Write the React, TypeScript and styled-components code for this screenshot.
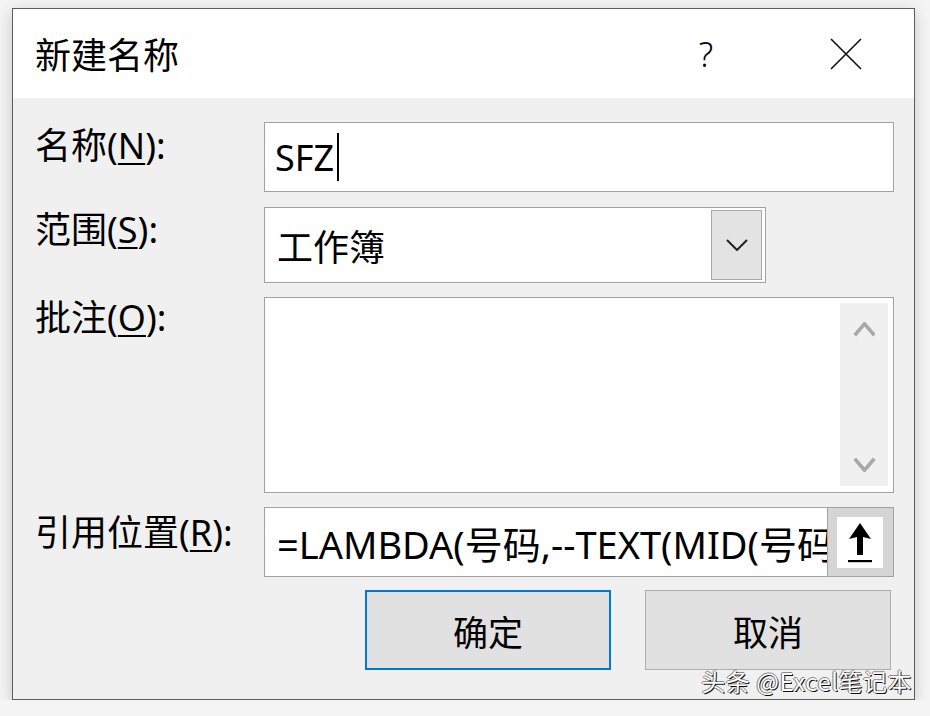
import * as React from "react";
import styled, { createGlobalStyle } from "styled-components";

const GlobalStyle = createGlobalStyle`
  html, body {
    margin: 0;
    padding: 0;
    background: #f4f4f4;
  }
  body {
    font-family: "Noto Sans", "Noto Sans CJK SC", sans-serif;
    color: #000;
  }
`;

const Window = styled.div`
  position: relative;
  box-sizing: border-box;
  width: 903px;
  margin: 8px 0 0 12px;
  border: 1px solid #5c5c5c;
  background: #f0f0f0;
  box-shadow: 0 4px 14px rgba(0, 0, 0, 0.18);
`;

const TitleBar = styled.div`
  height: 89px;
  background: #fff;
  display: flex;
  align-items: center;
  padding: 0 0 0 22px;
`;

const Title = styled.div`
  flex: 1;
  font-size: 36px;
  font-family: "Noto Sans CJK SC", sans-serif;
  margin-top: -2px;
`;

const TitleButton = styled.div<{ $w: number }>`
  width: ${(p) => p.$w}px;
  height: 89px;
  display: flex;
  align-items: center;
  justify-content: center;
  font-size: 34px;
  font-weight: 300;
`;

const Body = styled.div`
  display: grid;
  grid-template-columns: 229px minmax(0, 1fr);
  padding: 24px 20px 29px 22px;
`;

const Label = styled.div<{ $top: number; $gap: number }>`
  font-size: 36px;
  line-height: 42px;
  padding-top: ${(p) => p.$top}px;
  margin-bottom: ${(p) => p.$gap}px;
  white-space: nowrap;
`;

const Key = styled.span`
  text-decoration: underline;
  text-underline-offset: 4px;
  text-decoration-thickness: 2px;
`;

const Field = styled.div<{ $h: number; $gap: number; $w?: number }>`
  box-sizing: border-box;
  height: ${(p) => p.$h}px;
  width: ${(p) => (p.$w ? `${p.$w}px` : "auto")};
  margin-bottom: ${(p) => p.$gap}px;
  background: #fff;
  border: 1px solid #a2a2a2;
  display: flex;
  align-items: center;
  position: relative;
`;

const FieldText = styled.div<{ $size?: number; $pad?: number }>`
  flex: 1;
  min-width: 0;
  padding-left: ${(p) => p.$pad ?? 10}px;
  font-size: ${(p) => p.$size ?? 36}px;
  white-space: nowrap;
  overflow: hidden;
  display: flex;
  align-items: center;
`;

const Caret = styled.span`
  display: inline-block;
  width: 2px;
  height: 48px;
  background: #000;
  margin-left: 3px;
`;

const DropButton = styled.div`
  box-sizing: border-box;
  width: 51px;
  align-self: stretch;
  margin: 2px 3px 2px 0;
  background: #e3e3e3;
  border: 1px solid #a9a9a9;
  display: flex;
  align-items: center;
  justify-content: center;
`;

const ScrollTrack = styled.div`
  position: absolute;
  top: 5px;
  right: 5px;
  bottom: 6px;
  width: 48px;
  background: #f0f0f0;
  display: flex;
  flex-direction: column;
  justify-content: space-between;
  align-items: center;
  padding: 19px 0 14px;
  box-sizing: border-box;
`;

const CollapseButton = styled.div`
  box-sizing: border-box;
  width: 67px;
  height: 70px;
  margin: -1px -1px -1px 0;
  border: 1px solid #a3a3a3;
  background: #d5d5d5;
  padding: 9px 10px 8px 9px;
  display: flex;
`;

const CollapseFace = styled.div`
  flex: 1;
  background: #fff;
  display: flex;
  align-items: center;
  justify-content: center;
`;

const ButtonRow = styled.div`
  grid-column: 1 / 3;
  display: flex;
  justify-content: flex-end;
  gap: 34px;
  padding-right: 3px;
`;

const DialogButton = styled.div<{ $primary?: boolean }>`
  box-sizing: border-box;
  width: 246px;
  height: 80px;
  background: #e1e1e1;
  border: ${(p) => (p.$primary ? "2px solid #0078d7" : "1px solid #adadad")};
  display: flex;
  align-items: center;
  justify-content: center;
  font-size: 35px;
  font-family: "Noto Sans CJK SC", sans-serif;
`;

const Watermark = styled.div`
  position: absolute;
  right: 2px;
  bottom: 1px;
  font-size: 24px;
  font-family: "Noto Sans CJK SC", sans-serif;
  color: #fdfdfd;
  letter-spacing: 0.5px;
  text-shadow: 1px 1px 0 #111, -1px 0 0 #777, 0 -1px 0 #888;
  white-space: nowrap;
`;

const Chevron: React.FC<{ up?: boolean; color: string; w: number; h: number; sw: number }> = ({
  up,
  color,
  w,
  h,
  sw,
}) => (
  <svg width={w} height={h} viewBox={`0 0 ${w} ${h}`}>
    <polyline
      points={
        up
          ? `${sw / 2},${h - sw / 2} ${w / 2},${sw / 2} ${w - sw / 2},${h - sw / 2}`
          : `${sw / 2},${sw / 2} ${w / 2},${h - sw / 2} ${w - sw / 2},${sw / 2}`
      }
      fill="none"
      stroke={color}
      strokeWidth={sw}
    />
  </svg>
);

export default function App() {
  return (
    <>
      <GlobalStyle />
      <Window>
        <TitleBar>
          <Title>新建名称</Title>
          <TitleButton $w={144}>?</TitleButton>
          <TitleButton $w={136}>
            <svg width="32" height="32" viewBox="0 0 32 32">
              <path d="M1 1 L31 31 M31 1 L1 31" stroke="#111" strokeWidth="1.6" />
            </svg>
          </TitleButton>
        </TitleBar>
        <Body>
          <Label $top={3} $gap={15}>
            名称(<Key>N</Key>):
          </Label>
          <Field $h={70} $gap={15}>
            <FieldText>
              SFZ
              <Caret />
            </FieldText>
          </Field>

          <Label $top={2} $gap={14}>
            范围(<Key>S</Key>):
          </Label>
          <Field $h={76} $gap={14} $w={502}>
            <FieldText $pad={12}>工作簿</FieldText>
            <DropButton>
              <Chevron color="#222" w={22} h={12} sw={2} />
            </DropButton>
          </Field>

          <Label $top={0} $gap={14}>
            批注(<Key>O</Key>):
          </Label>
          <Field $h={196} $gap={14}>
            <ScrollTrack>
              <Chevron up color="#a8a8a8" w={23} h={15} sw={3.5} />
              <Chevron color="#a8a8a8" w={23} h={15} sw={3.5} />
            </ScrollTrack>
          </Field>

          <Label $top={5} $gap={13}>
            引用位置(<Key>R</Key>):
          </Label>
          <Field $h={70} $gap={13}>
            <FieldText $pad={12} $size={38}>=LAMBDA(号码,--TEXT(MID(号码</FieldText>
            <CollapseButton>
              <CollapseFace>
                <svg width="26" height="42" viewBox="0 0 26 42">
                  <path d="M13 1 L24 17 L16 15 L16 33 L10 33 L10 15 L2 17 Z" fill="#000" />
                  <rect x="1" y="38" width="24" height="2.2" fill="#000" />
                </svg>
              </CollapseFace>
            </CollapseButton>
          </Field>

          <ButtonRow>
            <DialogButton $primary>确定</DialogButton>
            <DialogButton>取消</DialogButton>
          </ButtonRow>
        </Body>
        <Watermark>头条 @Excel笔记本</Watermark>
      </Window>
    </>
  );
}
